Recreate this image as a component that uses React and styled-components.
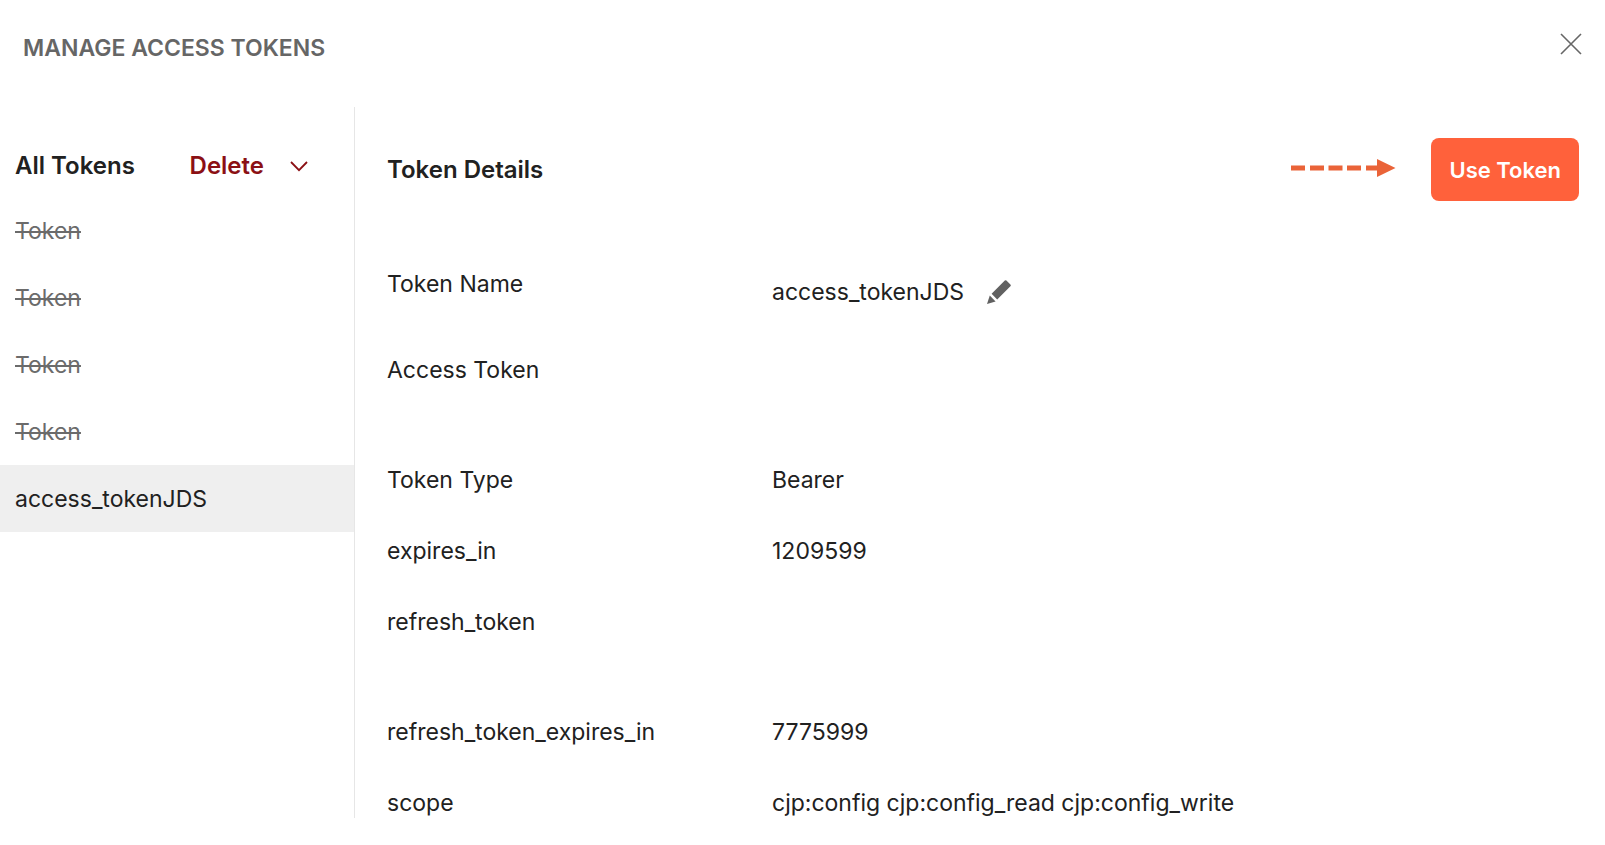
import React from "react";
import styled, { createGlobalStyle } from "styled-components";

const GlobalStyle = createGlobalStyle`
  * { box-sizing: border-box; }
  body {
    margin: 0;
    background: #ffffff;
    color: #212121;
    font-family: Inter, "Liberation Sans", sans-serif;
    font-size: 23px;
    line-height: 30px;
  }
  button {
    border: 0;
    padding: 0;
    background: none;
    font: inherit;
    cursor: pointer;
  }
  svg { display: block; }
`;

const Header = styled.header`
  display: flex;
  justify-content: space-between;
  align-items: flex-start;
  height: 107px;
  padding: 33px 23px 0;
`;

const Title = styled.h1`
  margin: 0;
  color: #666666;
  font-size: 23px;
  font-weight: 600;
`;

const CloseButton = styled.button`
  color: #666666;
`;

const Body = styled.main`
  display: flex;
`;

const Sidebar = styled.aside`
  flex: none;
  width: 355px;
  padding-top: 44px;
  border-right: 1px solid #e6e6e6;
`;

const SidebarHead = styled.div`
  display: flex;
  justify-content: space-between;
  align-items: center;
  padding: 0 46px 0 15px;
  margin-bottom: 16px;
`;

const Heading = styled.h2`
  margin: 0;
  font-size: 24px;
  font-weight: 600;
`;

const DeleteButton = styled.button`
  display: flex;
  align-items: center;
  gap: 26px;
  color: #8b1014;
  font-size: 24px;
  font-weight: 600;
`;

const TokenList = styled.ul`
  margin: 0;
  padding: 0;
  list-style: none;
`;

const TokenItem = styled.button`
  display: block;
  width: 100%;
  height: 67px;
  padding: 0 15px;
  text-align: left;
  color: ${(p) => (p.$expired ? "#6b6b6b" : "#212121")};
  background: ${(p) => (p.$selected ? "#efefef" : "transparent")};
  text-decoration: ${(p) => (p.$expired ? "line-through" : "none")};
`;

const Details = styled.section`
  flex: 1;
  min-width: 0;
  padding: 31px 26px 0 32px;
`;

const DetailsHead = styled.div`
  display: flex;
  align-items: center;
  margin-bottom: 68px;
`;

const Action = styled.div`
  display: flex;
  align-items: center;
  gap: 35px;
  margin-left: auto;
`;

const UseButton = styled.button`
  height: 63px;
  padding: 0 18px;
  border-radius: 8px;
  background: #ff613b;
  color: #ffffff;
  font-size: 22px;
  font-weight: 600;
`;

const Table = styled.table`
  width: 100%;
  table-layout: fixed;
  border-collapse: collapse;
`;

const rowHeights = { name: 86, tall: 110, normal: 71, last: 30 };

const Row = styled.tr`
  height: ${(p) => rowHeights[p.$size]}px;
`;

const Label = styled.th`
  width: 385px;
  padding: 0;
  text-align: left;
  vertical-align: top;
  font-weight: 400;
`;

const Value = styled.td`
  padding: 0;
  vertical-align: top;
`;

const EditableValue = styled.div`
  display: flex;
  align-items: center;
  gap: 23px;
  padding-top: 8px;
`;

const CloseIcon = () => (
  <svg width="22" height="22" viewBox="0 0 22 22" fill="none" stroke="currentColor" strokeWidth="1.6">
    <path d="M1 1 21 21M21 1 1 21" />
  </svg>
);

const ChevronIcon = () => (
  <svg width="18" height="11" viewBox="0 0 18 11" fill="none" stroke="currentColor" strokeWidth="1.8">
    <path d="M1 1 9 9.2 17 1" />
  </svg>
);

const PencilIcon = () => (
  <svg width="24" height="24" viewBox="0 0 24 24" fill="#616161">
    <path d="M4.6 13.8 17.8.6q.8-.8 1.6 0l4 4q.8.8 0 1.6L10.2 19.400Z" />
    <path d="M2.8 15.6 8.6 21.4 0 24Z" />
  </svg>
);

const DashedArrow = () => (
  <svg width="105" height="24" viewBox="0 0 105 24" fill="#ea6338" aria-hidden="true">
    <path d="M0 7.5h14v5H0ZM19 7.5h14v5H19ZM37.5 7.5h14v5h-14ZM56 7.5h14v5H56ZM75 7.5h11V1l18.500 9L86 19v-6.500H75Z" />
  </svg>
);

const tokens = [
  { name: "Token", expired: true },
  { name: "Token", expired: true },
  { name: "Token", expired: true },
  { name: "Token", expired: true },
  { name: "access_tokenJDS", selected: true },
];

const fields = [
  { label: "Token Name", value: "access_tokenJDS", size: "name", editable: true },
  { label: "Access Token", value: "", size: "tall" },
  { label: "Token Type", value: "Bearer", size: "normal" },
  { label: "expires_in", value: "1209599", size: "normal" },
  { label: "refresh_token", value: "", size: "tall" },
  { label: "refresh_token_expires_in", value: "7775999", size: "normal" },
  { label: "scope", value: "cjp:config cjp:config_read cjp:config_write", size: "last" },
];

export default function App() {
  return (
    <>
      <GlobalStyle />
      <Header>
        <Title>MANAGE ACCESS TOKENS</Title>
        <CloseButton aria-label="Close">
          <CloseIcon />
        </CloseButton>
      </Header>
      <Body>
        <Sidebar>
          <SidebarHead>
            <Heading>All Tokens</Heading>
            <DeleteButton>
              Delete
              <ChevronIcon />
            </DeleteButton>
          </SidebarHead>
          <TokenList>
            {tokens.map((token, i) => (
              <li key={i}>
                <TokenItem $expired={token.expired} $selected={token.selected}>
                  {token.name}
                </TokenItem>
              </li>
            ))}
          </TokenList>
        </Sidebar>
        <Details>
          <DetailsHead>
            <Heading>Token Details</Heading>
            <Action>
              <DashedArrow />
              <UseButton>Use Token</UseButton>
            </Action>
          </DetailsHead>
          <Table>
            <tbody>
              {fields.map((field) => (
                <Row key={field.label} $size={field.size}>
                  <Label scope="row">{field.label}</Label>
                  <Value>
                    {field.editable ? (
                      <EditableValue>
                        {field.value}
                        <button aria-label="Edit token name">
                          <PencilIcon />
                        </button>
                      </EditableValue>
                    ) : (
                      field.value
                    )}
                  </Value>
                </Row>
              ))}
            </tbody>
          </Table>
        </Details>
      </Body>
    </>
  );
}
